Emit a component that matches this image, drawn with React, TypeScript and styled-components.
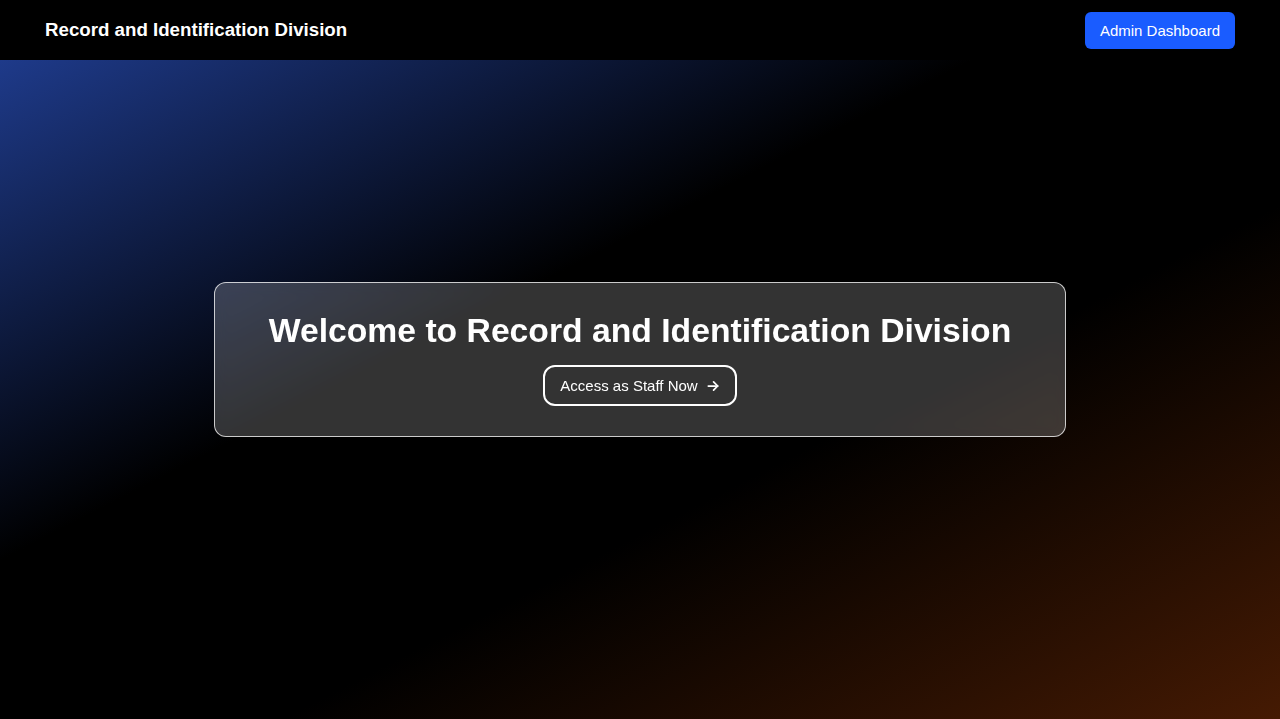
import React from "react";
import styled, { createGlobalStyle } from "styled-components";

const Global = createGlobalStyle`
  * { box-sizing: border-box; }
  html, body { margin: 0; padding: 0; background: #000; }
  body { font-family: "Liberation Sans", Arial, sans-serif; color: #fff; }
`;

const Page = styled.div`
  display: flex;
  flex-direction: column;
  height: 719px;
  background: #000;
`;

const NavBar = styled.header`
  height: 60px;
  flex: 0 0 60px;
  display: flex;
  align-items: center;
  justify-content: space-between;
  padding: 0 45px;
  background: #000;
`;

const Brand = styled.h1`
  margin: 0;
  font-size: 18.7px;
  font-weight: 700;
  color: #fff;
  line-height: 24px;
`;

const AdminButton = styled.button`
  font-family: inherit;
  font-size: 15px;
  line-height: 21px;
  color: #fff;
  background: #1a5cff;
  border: none;
  border-radius: 6px;
  padding: 8px 15px;
  cursor: pointer;
`;

const Hero = styled.main`
  flex: 1;
  display: flex;
  align-items: center;
  justify-content: center;
  padding-bottom: 60px;
  background: linear-gradient(
    to bottom right,
    #1e3a8a 0%,
    #000 38%,
    #000 61%,
    #451a03 100%
  );
`;

const Card = styled.section`
  width: 852px;
  display: flex;
  flex-direction: column;
  align-items: center;
  padding: 27px 32px 30px;
  border: 1px solid rgba(255, 255, 255, 0.75);
  border-radius: 12px;
  background: rgba(255, 255, 255, 0.2);
  backdrop-filter: blur(8px);
`;

const Heading = styled.h2`
  margin: 0 0 15px;
  font-size: 33.7px;
  line-height: 40px;
  font-weight: 700;
  color: #fff;
  text-align: center;
`;

const StaffButton = styled.button`
  display: inline-flex;
  align-items: center;
  gap: 8px;
  font-family: inherit;
  font-size: 15px;
  line-height: 20px;
  color: #fff;
  background: transparent;
  border: 2px solid #fff;
  border-radius: 12px;
  padding: 8.5px 15px;
  cursor: pointer;
`;

const Arrow = () => (
  <svg width="14" height="14" viewBox="0 0 24 24" fill="none" stroke="#fff" strokeWidth="3" strokeLinecap="round" strokeLinejoin="round">
    <path d="M4 12h16" />
    <path d="M13 5l7 7-7 7" />
  </svg>
);

export default function App() {
  return (
    <>
      <Global />
      <Page>
        <NavBar>
          <Brand>Record and Identification Division</Brand>
          <AdminButton>Admin Dashboard</AdminButton>
        </NavBar>
        <Hero>
          <Card>
            <Heading>Welcome to Record and Identification Division</Heading>
            <StaffButton>
              Access as Staff Now <Arrow />
            </StaffButton>
          </Card>
        </Hero>
      </Page>
    </>
  );
}
